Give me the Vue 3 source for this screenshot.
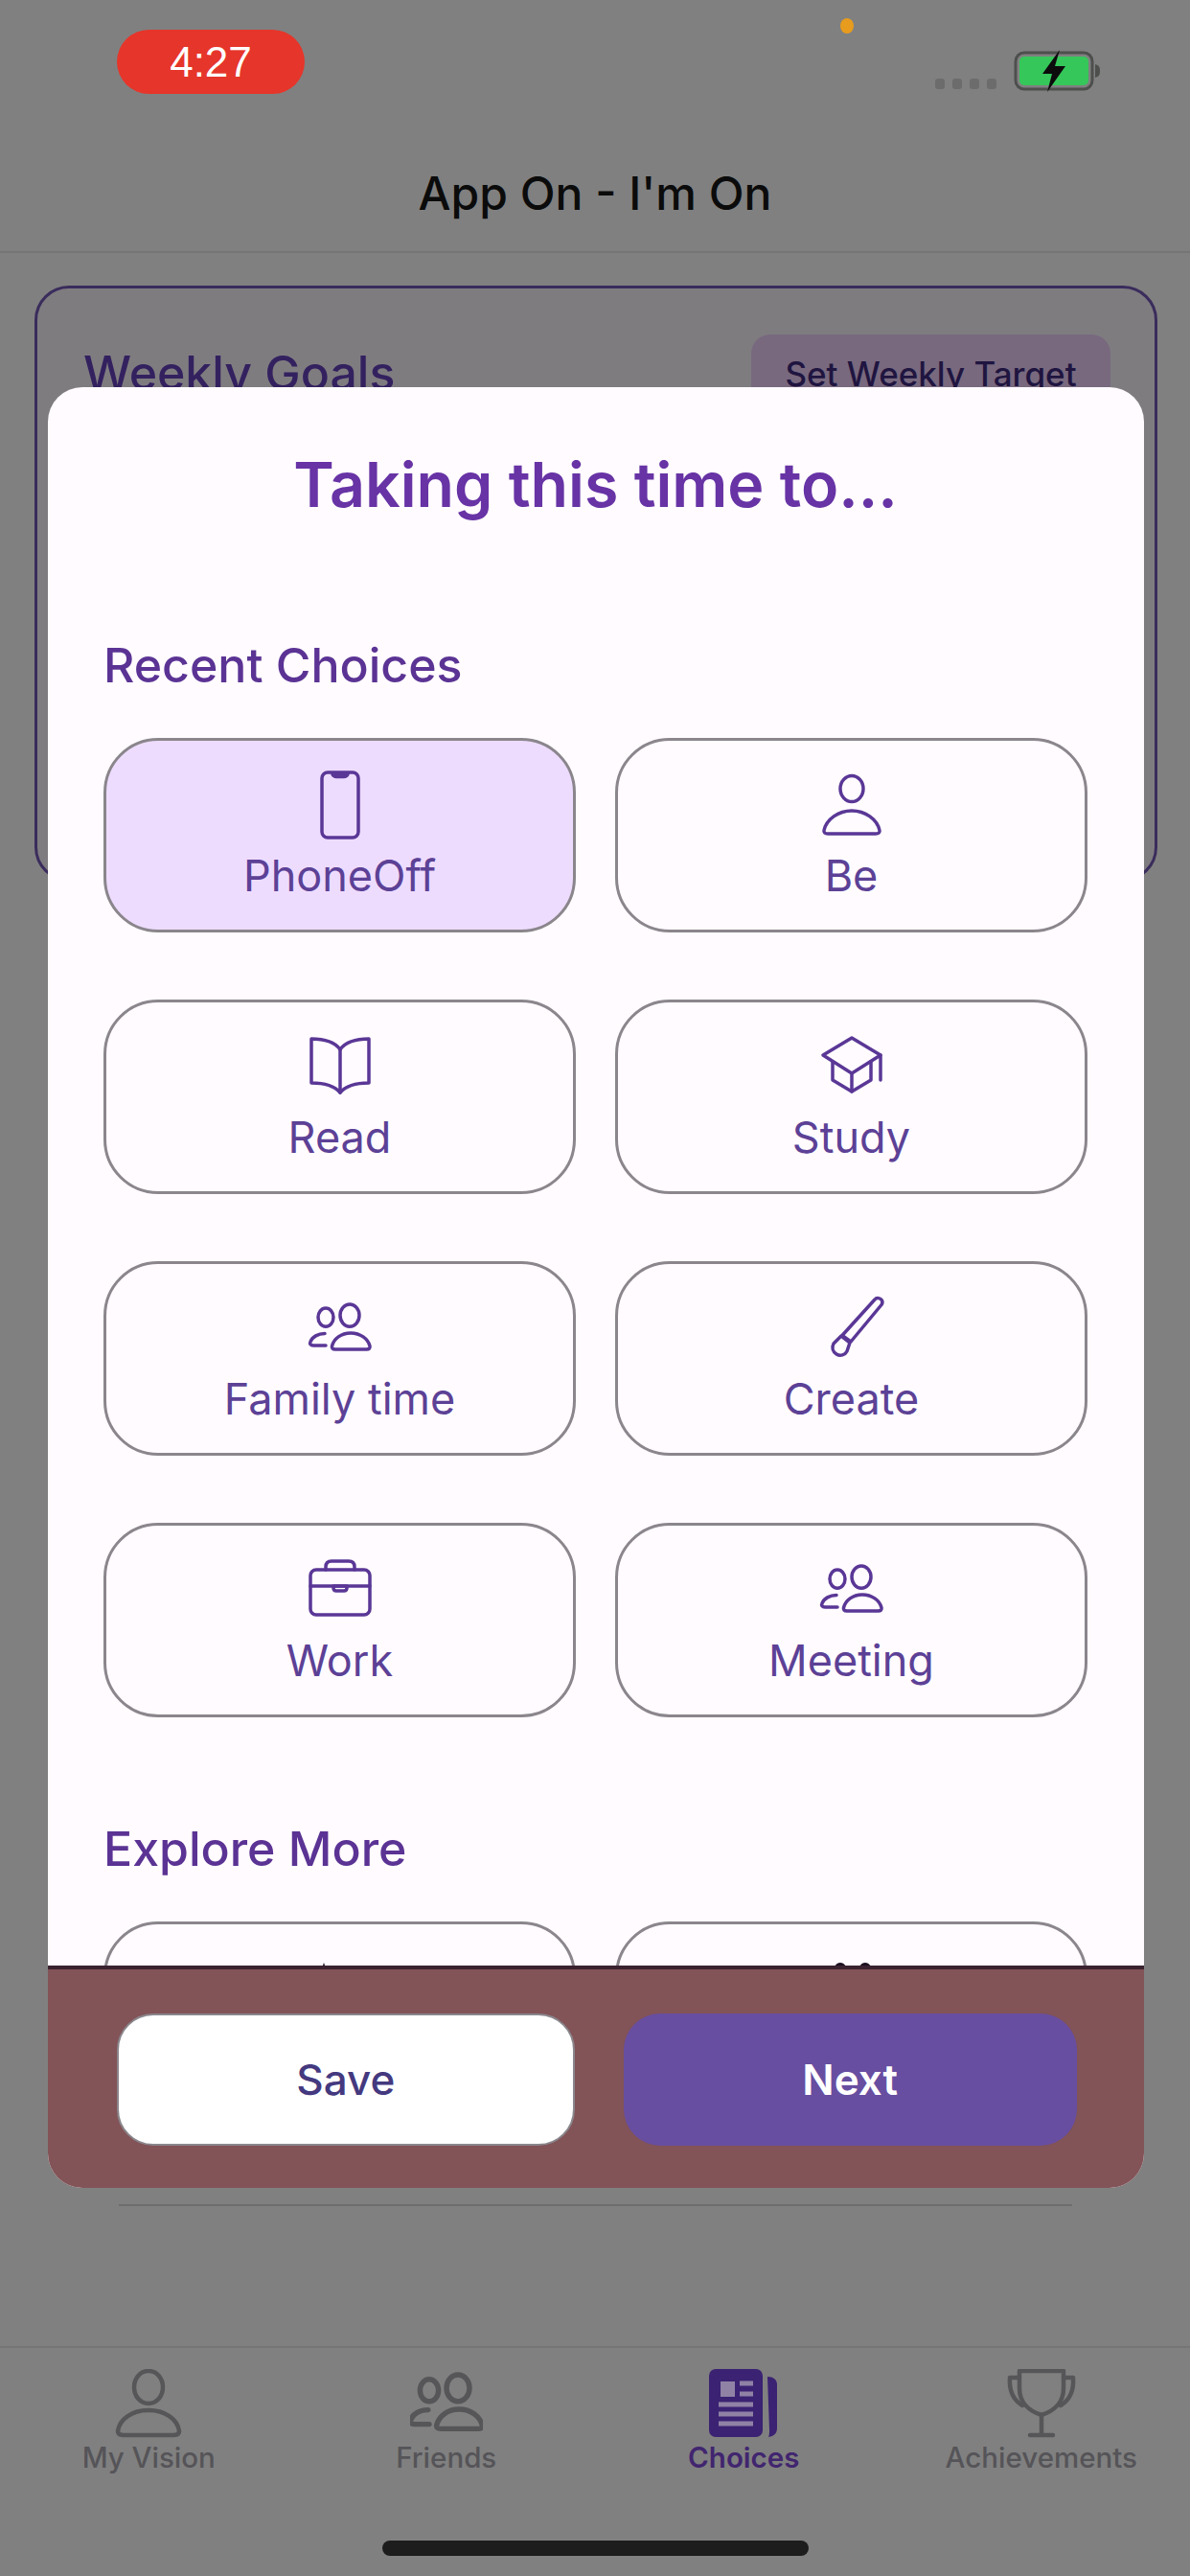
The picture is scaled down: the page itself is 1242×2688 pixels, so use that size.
<script setup>
// Pantalla "Choices" con el modal de selección abierto
const iconos = {
  phone: ['M23 2h26a6 6 0 0 1 6 6v56a6 6 0 0 1-6 6H23a6 6 0 0 1-6-6V8a6 6 0 0 1 6-6z', 'M28 4c1 2 2 2.5 4 2.5h8c2 0 3-.5 4-2.5z'],
  person: ['M36 5.500c6.500 0 12 6 12 13.500s-5.500 13.500-12 13.500-12-6-12-13.500 5.500-13.500 12-13.500z', 'M11 66c-3 0-4.500-1.500-4-3.500C9.500 51 22 42 36 42s26.500 9 29 20.500c.5 2-1 3.500-4 3.500z'],
  book: ['M36 18C30 10 18 7 6 7v46c12 0 24 3 30 10', 'M36 18C42 10 54 7 66 7v46c-12 0-24 3-30 10', 'M36 18v45'],
  cap: ['M36 6L6 24l30 19 30-19z', 'M16 31v19l20 12 20-12V31', 'M36 43v19', 'M66 24v26'],
  people: ['M21 15c4.500 0 8 4.300 8 9.600s-3.500 9.600-8 9.600-8-4.300-8-9.600 3.500-9.600 8-9.600z', 'M46 11c5.500 0 10 5.200 10 11.600s-4.500 11.600-10 11.600-10-5.200-10-11.600 4.500-11.600 10-11.600z', 'M31 58c-3 0-4-1.500-3.500-3.500C29.500 47 37 41 47 41s18 6 20 13.500c.5 2-.5 3.500-3.500 3.500z', 'M21 54H8c-3 0-4-2-3-4 2-5 8-8.500 15-8.500'],
  brush: ['M60 6c2-2.500 6-1.500 7.500 1 .8 1.500.5 3-.5 4.500L35 50l-9-6.500z', 'M25 44l9 7-3 9c-2 4-7 5.500-11 3-4-2.500-5-7-3-11z'],
  work: ['M11 15h50a6 6 0 0 1 6 6v35a6 6 0 0 1-6 6H11a6 6 0 0 1-6-6V21a6 6 0 0 1 6-6z', 'M21 15v-3c0-4 2-6 6-6h18c4 0 6 2 6 6v3', 'M5 32h62', 'M29 32v2c0 2 1 3 3 3h8c2 0 3-1 3-3v-2z'],
  peak: ['M19 9L8 40h22z'],
  heads: ['M24 9c4 0 7 4 7 9s-3 9-7 9-7-4-7-9 3-9 7-9z', 'M50 9c4 0 7 4 7 9s-3 9-7 9-7-4-7-9 3-9 7-9z'],
  // versiones de la barra inferior, la cabeza es más grande que en las tarjetas
  vision: ['M36 2c8.500 0 15 7.500 15 17s-6.500 17-15 17-15-7.500-15-17 6.500-17 15-17z', 'M10 69c-4 0-6-1.500-6-4.500C6 52 19 43 36 43s30 9 32 21.500c0 3-2 4.500-6 4.500z'],
  trophy: ['M13 2h46v18c0 15-10 24-23 28-13-4-23-13-23-28z', 'M13 9H3c-1 14 3 23 13 29', 'M59 9h10c1 14-3 23-13 29', 'M36 48v20', 'M24 69h24']
}

const recientes = [
  { nombre: 'PhoneOff', icono: 'phone', activo: true },
  { nombre: 'Be', icono: 'person' },
  { nombre: 'Read', icono: 'book' },
  { nombre: 'Study', icono: 'cap' },
  { nombre: 'Family time', icono: 'people' },
  { nombre: 'Create', icono: 'brush' },
  { nombre: 'Work', icono: 'work' },
  { nombre: 'Meeting', icono: 'people' }
]

// Solo asoma la parte de arriba, el resto queda tapado por el pie del modal
const explorar = [{ icono: 'peak' }, { icono: 'heads' }]

const tabs = [
  { nombre: 'My Vision', icono: 'vision', caja: '0 0 72 72' },
  { nombre: 'Friends', icono: 'people', caja: '6 6 60 60' },
  { nombre: 'Choices', activo: true },
  { nombre: 'Achievements', icono: 'trophy', caja: '0 0 72 72' }
]
</script>

<template>
  <div class="pantalla">
    <div class="status">
      <span class="pill">4:27</span>
      <span class="punto-naranja"></span>
      <div class="senal"><i></i><i></i><i></i><i></i></div>
      <svg class="bateria" width="92" height="44" viewBox="0 0 92 44">
        <rect x="2" y="3" width="80" height="38" rx="9" fill="none" stroke="#4d4f4d" stroke-width="3" />
        <rect x="6" y="7" width="72" height="30" rx="5" fill="#35c75a" />
        <path d="M85 15c4 1 5 3 5 7s-1 6-5 7z" fill="#4d4f4d" />
        <path d="M48 0L30 25h10l-5 19 19-27H43z" fill="#0c0c0c" />
      </svg>
    </div>

    <header class="cabecera">App On - I'm On</header>

    <section class="semana">
      <div class="semana-fila">
        <h2>Weekly Goals</h2>
        <button class="btn-target">Set Weekly Target</button>
      </div>
    </section>

    <div class="separador"></div>

    <nav class="tabbar">
      <div class="tabs">
        <div v-for="t in tabs" :key="t.nombre" class="tab" :class="{ activo: t.activo }">
          <svg v-if="t.icono" class="tab-icono" width="76" height="72" :viewBox="t.caja" fill="none">
            <path v-for="d in iconos[t.icono]" :key="d" :d="d" stroke="#565558" stroke-width="4.500" stroke-linejoin="round" stroke-linecap="round" />
          </svg>
          <svg v-else class="tab-icono" width="76" height="72" viewBox="0 0 72 72">
            <rect x="0" y="0" width="56" height="71" rx="7" fill="#3b2272" />
            <path d="M61 8c6 0 10 3 10 8v46c0 5-3 8-9 9 1-2 1-4 1-7z" fill="#3b2272" />
            <rect x="12" y="13" width="15" height="16" fill="#8f82a5" />
            <path d="M32 15h14M32 26h14M10 37h36M10 47h36M10 57h36" stroke="#8f82a5" stroke-width="5" />
          </svg>
          <span>{{ t.nombre }}</span>
        </div>
      </div>
      <div class="home-bar"></div>
    </nav>

    <div class="modal">
      <div class="modal-scroll">
        <h1>Taking this time to...</h1>
        <h3 class="seccion">Recent Choices</h3>
        <div class="grid">
          <div v-for="c in recientes" :key="c.nombre" class="opcion" :class="{ activo: c.activo }">
            <svg width="72" height="72" viewBox="0 0 72 72" fill="none">
              <path v-for="d in iconos[c.icono]" :key="d" :d="d" stroke="#5a3796" stroke-width="3.500" stroke-linejoin="round" stroke-linecap="round" />
            </svg>
            <span>{{ c.nombre }}</span>
          </div>
        </div>
        <h3 class="seccion explorar">Explore More</h3>
        <div class="grid">
          <div v-for="c in explorar" :key="c.icono" class="opcion">
            <svg width="72" height="72" viewBox="0 0 72 72" fill="#1c1020">
              <path v-for="d in iconos[c.icono]" :key="d" :d="d" />
            </svg>
          </div>
        </div>
      </div>
      <div class="modal-pie">
        <button class="btn-save">Save</button>
        <button class="btn-next">Next</button>
      </div>
    </div>
  </div>
</template>

<style>
html,
body {
  margin: 0;
  background: #808080;
}
</style>

<style scoped>
.pantalla {
  position: relative;
  width: 1242px;
  height: 2688px;
  overflow: hidden;
  display: flex;
  flex-direction: column;
  background: #808080;
  font-family: Inter, "Liberation Sans", sans-serif;
}

.status {
  position: relative;
  height: 140px;
  box-sizing: border-box;
  padding: 31px 92px 0 122px;
  display: flex;
  align-items: flex-start;
}

.pill {
  width: 196px;
  height: 67px;
  border-radius: 34px;
  background: #e6352a;
  color: #fff;
  font-family: "Liberation Sans", sans-serif;
  font-size: 44px;
  line-height: 67px;
  text-align: center;
}

.punto-naranja {
  position: absolute;
  left: 877px;
  top: 19px;
  width: 14px;
  height: 16px;
  border-radius: 50%;
  background: #e79c1e;
}

.senal {
  margin-left: auto;
  margin-top: 51px;
  display: flex;
  gap: 8px;
}

.senal i {
  width: 10px;
  height: 11px;
  border-radius: 3px;
  background: #6c6c6c;
}

.bateria {
  margin-left: 18px;
  margin-top: 21px;
}

.cabecera {
  height: 124px;
  border-bottom: 2px solid #757575;
  box-sizing: border-box;
  padding-top: 32px;
  color: #0b0b0b;
  font-size: 48px;
  font-weight: 500;
  line-height: 60px;
  text-align: center;
}

.semana {
  margin: 34px 34px 0 36px;
  height: 622px;
  box-sizing: border-box;
  border: 3px solid #3a2c5c;
  border-radius: 36px;
  background: #7f7c80;
  padding: 48px 46px 0 48px;
}

.semana-fila {
  display: flex;
  justify-content: space-between;
  align-items: flex-start;
}

.semana h2 {
  margin: 8px 0 0;
  color: #33215f;
  font-size: 50px;
  font-weight: 500;
  line-height: 64px;
}

.btn-target {
  width: 375px;
  height: 82px;
  border: none;
  border-radius: 20px;
  background: #78697f;
  color: #1f1540;
  font-family: inherit;
  font-size: 35px;
  font-weight: 500;
}

.separador {
  margin: 1380px 123px 0 124px;
  height: 2px;
  background: #6e6e6e;
}

.tabbar {
  margin-top: auto;
  height: 240px;
  box-sizing: border-box;
  border-top: 2px solid #757575;
  padding-top: 22px;
}

.tabs {
  display: grid;
  grid-template-columns: repeat(4, 1fr);
}

.tab {
  display: flex;
  flex-direction: column;
  align-items: center;
  color: #555458;
  font-size: 29.500px;
  font-weight: 500;
  line-height: 38px;
}

.tab.activo {
  color: #41256f;
  font-weight: 600;
}

.tab-icono {
  display: block;
  margin-bottom: 1px;
}

.home-bar {
  width: 445px;
  height: 16px;
  margin: 68px auto 0;
  border-radius: 8px;
  background: #1d1d1d;
}

.modal {
  position: absolute;
  left: 50px;
  top: 404px;
  width: 1144px;
  height: 1879px;
  border-radius: 36px;
  overflow: hidden;
  display: flex;
  flex-direction: column;
  background: #fffbff;
}

.modal-scroll {
  flex: 1;
  min-height: 0;
  overflow: hidden;
  padding: 57px 59px 0 58px;
}

.modal h1 {
  margin: 0 0 113px;
  color: #6733a5;
  font-size: 64.500px;
  font-weight: 600;
  line-height: 90px;
  text-align: center;
}

.seccion {
  margin: 0 0 46px;
  color: #5b3394;
  font-size: 50px;
  font-weight: 500;
  line-height: 60px;
}

.seccion.explorar {
  margin-top: 107px;
}

.grid {
  display: grid;
  grid-template-columns: 1fr 1fr;
  column-gap: 41px;
  row-gap: 70px;
}

.opcion {
  height: 203px;
  box-sizing: border-box;
  border: 3px solid #8a868c;
  border-radius: 57px;
  padding-top: 31px;
  display: flex;
  flex-direction: column;
  align-items: center;
  color: #5c4196;
  font-size: 45px;
  line-height: 56px;
}

.opcion.activo {
  background: #eedcff;
}

.opcion svg {
  margin-bottom: 10px;
}

.modal-pie {
  height: 232px;
  flex: none;
  box-sizing: border-box;
  border-top: 4px solid #3a2230;
  background: #825357;
  padding: 46px 70px 44px 72px;
  display: flex;
  gap: 51px;
}

.modal-pie button {
  flex: 1;
  border-radius: 38px;
  font-family: inherit;
  font-size: 44px;
}

.btn-save {
  background: #fff;
  border: 2px solid #8a868c;
  color: #44397f;
  font-weight: 500;
}

.btn-next {
  background: #674ea0;
  border: none;
  color: #fff;
  font-weight: 600;
}
</style>
